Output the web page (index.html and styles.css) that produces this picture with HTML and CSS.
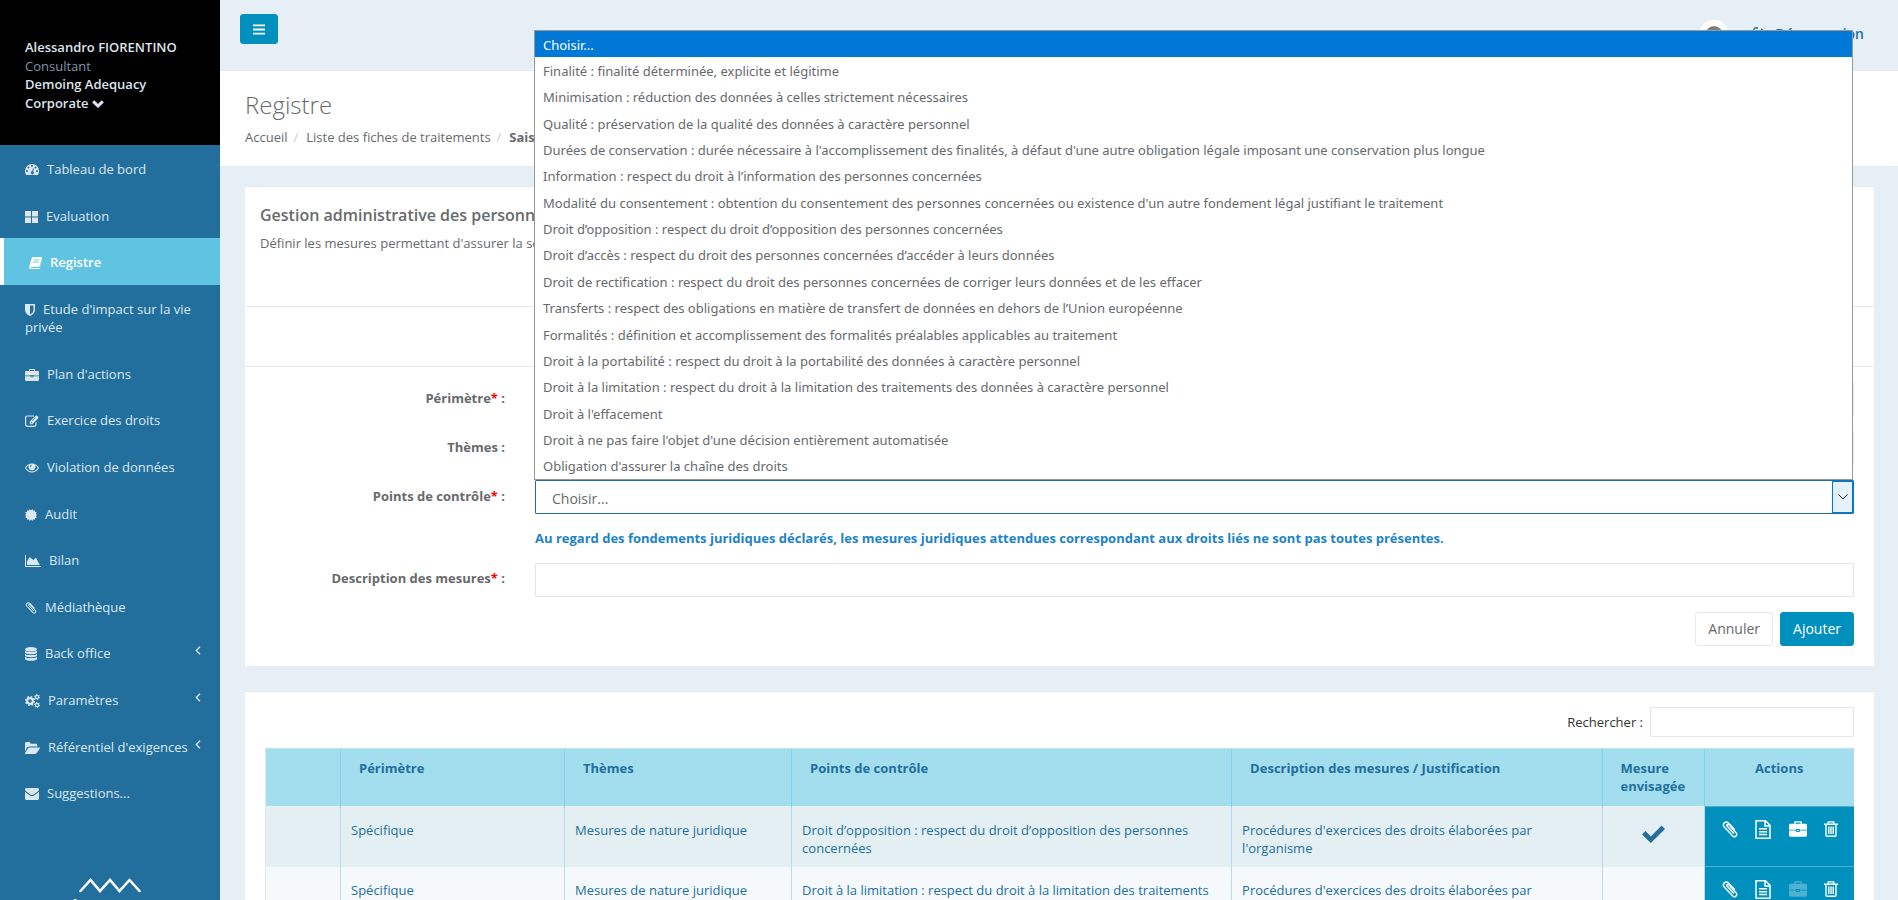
FILE: index.html
```html
<!DOCTYPE html>
<html lang="fr">
<head>
<meta charset="utf-8">
<title>Registre</title>
<link rel="stylesheet" href="styles.css">
</head>
<body>
<svg class="sprite" aria-hidden="true">
  <symbol id="i-dashboard" viewBox="0 0 14 12"><path fill-rule="evenodd" d="M7 0a7 7 0 0 0-7 7c0 1.600.5 3 1.300 4h11.400c.8-1 1.300-2.400 1.300-4a7 7 0 0 0-7-7zM2 6a1 1 0 1 0 0 2 1 1 0 0 0 0-2zm1.500-3.500a1 1 0 1 0 0 2 1 1 0 0 0 0-2zM7 1a1 1 0 1 0 0 2 1 1 0 0 0 0-2zm3.500 1.500a1 1 0 1 0 0 2 1 1 0 0 0 0-2zM12 6a1 1 0 1 0 0 2 1 1 0 0 0 0-2zM8 4.300l-.8 3a1.500 1.500 0 1 0 1 .3l.7-3z"/></symbol>
  <symbol id="i-grid" viewBox="0 0 13 12"><path d="M0 0h6v5.500H0zM7 0h6v5.500H7zM0 6.500h6V12H0zM7 6.500h6V12H7z"/></symbol>
  <symbol id="i-book" viewBox="0 0 13 12"><path fill-rule="evenodd" d="M4.500 0H12c.8 0 1.100.5.900 1.200l-2.300 8c-.2.500-.6.800-1.200.8H2.200c-.6 0-.8.300-.6.700.1.300.4.400.8.400H10c.5 0 .8-.2 1-.7L13 3.500c.1.300.1.600 0 .9l-2 6.600c-.2.600-.7 1-1.400 1H2.200C.8 12-.3 10.900.1 9.700L2.600 1.500C2.900.6 3.500 0 4.500 0zm.4 2.400-.3.900h5.600l.3-.9zm-.7 2.200-.3.900h5.600l.3-.9z"/></symbol>
  <symbol id="i-shield" viewBox="0 0 10 12"><path fill-rule="evenodd" d="M0 0h10v6c0 3-2.500 5-5 6-2.500-1-5-3-5-6zM5 1.500v8.800C7 9.300 8.500 8 8.500 6V1.500z"/></symbol>
  <symbol id="i-briefcase" viewBox="0 0 14 12"><path fill-rule="evenodd" d="M4 2V.9C4 .4 4.400 0 4.900 0h4.200c.5 0 .9.400.9.900V2h2.800c.7 0 1.200.5 1.200 1.200V6.500H8.500V6h-3v.5H0V3.200C0 2.500.5 2 1.200 2zm1-1v1h4V1zM0 7.200h5.500v.4c0 .5.200.7.700.7h1.600c.5 0 .7-.2.700-.7v-.4H14v3.600c0 .7-.5 1.200-1.200 1.200H1.200C.5 12 0 11.500 0 10.800zM6.300 6.800h1.400v.8H6.300z"/></symbol>
  <symbol id="i-edit" viewBox="0 0 14 12"><path fill="none" stroke="currentColor" stroke-width="1.200" d="M9 1H2.300C1.300 1 .6 1.700.6 2.600v7c0 1 .7 1.700 1.700 1.700h7c1 0 1.700-.7 1.700-1.700V7.500"/><path d="M4.800 9.200V6.600L10.700.8c.4-.4.900-.4 1.300 0l1.200 1.200c.4.400.4.900 0 1.300L7.400 9.200zm1-1.500.6.700 1-.3-1.100-1.100-.3.700zm1.300-2.200.4.400L10.800 2.600l-.4-.4z" fill-rule="evenodd"/></symbol>
  <symbol id="i-eye" viewBox="0 0 14 10"><path fill-rule="evenodd" d="M7 .5c3 0 5.500 1.700 7 4.500-1.500 2.800-4 4.500-7 4.500S1.500 7.800 0 5C1.500 2.200 4 .5 7 .5zM3.900 2.300C2.700 3 1.800 3.900 1.100 5c1.400 2.100 3.500 3.400 5.900 3.400S11.500 7.100 12.900 5c-.7-1.100-1.600-2-2.800-2.700a3.500 3.500 0 1 1-6.200 0zM7 1.700c-1.300 0-2.400 1-2.400 2.400h.8C5.400 3.200 6.100 2.500 7 2.500z"/></symbol>
  <symbol id="i-cert" viewBox="0 0 12 12"><path d="M6 1.400 7.400 0l.7 1.800L10 1.200l.1 1.800 1.700.3-.9 1.600L12 6l-1.100 1.100.9 1.600-1.700.3-.1 1.800-1.900-.6L7.400 12 6 10.600 4.600 12l-.7-1.800-1.900.6L1.900 9l-1.700-.3.900-1.600L0 6l1.100-1.100-.9-1.600L1.900 3 2 1.200l1.900.6L4.600 0z"/></symbol>
  <symbol id="i-chart" viewBox="0 0 16 12"><path d="M0 0h1v11h15v1H0zM2 10V6.500L4.800 2l3.400 3L11 2.800l3.800 7.200z"/></symbol>
  <symbol id="i-clip" viewBox="0 0 12 13"><path fill="none" stroke="currentColor" stroke-width="1.100" stroke-linecap="round" d="M8.600 9.200 3.900 4.100C3 3 4.300 2 5.200 2.900l5.500 6.200c1.400 1.800-1 4-2.600 2.400L1.600 4.600C-.3 2.300 2.600-.5 4.800 1.500l4.500 4.800"/></symbol>
  <symbol id="i-db" viewBox="0 0 12 14"><ellipse cx="6" cy="2.300" rx="6" ry="2.300"/><path d="M0 3.800c2 1.600 10 1.600 12 0v1.600c0 2.300-12 2.300-12 0zM0 7c2 1.600 10 1.600 12 0v1.600c0 2.300-12 2.300-12 0zM0 10.100c2 1.600 10 1.600 12 0v1.600c0 2.700-12 2.700-12 0z"/></symbol>
  <symbol id="i-cogs" viewBox="0 0 15 14"><circle cx="5" cy="7" r="2.900" fill="none" stroke="currentColor" stroke-width="2.200"/><circle cx="5" cy="7" r="4.400" fill="none" stroke="currentColor" stroke-width="1.400" stroke-dasharray="1.730 1.730"/><circle cx="12" cy="3" r="1.600" fill="none" stroke="currentColor" stroke-width="1.200"/><circle cx="12" cy="3" r="2.500" fill="none" stroke="currentColor" stroke-dasharray="1.310 1.310"/><circle cx="12" cy="11" r="1.600" fill="none" stroke="currentColor" stroke-width="1.200"/><circle cx="12" cy="11" r="2.500" fill="none" stroke="currentColor" stroke-dasharray="1.310 1.310"/></symbol>
  <symbol id="i-folder" viewBox="0 0 14 11"><path d="M0 9V1.500C0 .7.600 0 1.500 0h2.300c.8 0 1.400.6 1.400 1.500h4.900c.8 0 1.400.6 1.400 1.500v1H4.200c-1 0-2 .5-2.700 1.300zM4.300 5h9.200c.5 0 .6.400.4.800l-3 4.300c-.4.500-1 .9-1.800.9H.5c-.5 0-.6-.4-.4-.8l2.500-4.300c.4-.5 1-.9 1.700-.9z"/></symbol>
  <symbol id="i-mail" viewBox="0 0 14 12"><path d="M0 1.500C0 .6.600 0 1.400 0h11.200c.8 0 1.400.6 1.400 1.500 0 .8-.5 1.400-1.200 1.900L8.500 6.500c-.9.700-2.100.7-3 0L1.200 3.400C.5 2.900 0 2.300 0 1.500zM0 3.800l5 3.700c1.200.9 2.800.9 4 0l5-3.700v6.700c0 .9-.6 1.500-1.400 1.500H1.400C.6 12 0 11.400 0 10.500z"/></symbol>
  <symbol id="i-left" viewBox="0 0 5 8"><path fill="none" stroke="currentColor" stroke-width="1.200" d="M4.300.6 1 4l3.300 3.400"/></symbol>
  <symbol id="i-down" viewBox="0 0 12 8"><path fill="none" stroke="currentColor" stroke-width="3" d="m1.200 1.400 4.800 4.600 4.800-4.600"/></symbol>
  <symbol id="i-bars" viewBox="0 0 13 11"><path d="M0 0h13v2H0zM0 4.500h13v2H0zM0 9h13v2H0z"/></symbol>
  <symbol id="i-out" viewBox="0 0 14 12"><path fill="none" stroke="currentColor" stroke-width="1.300" d="M5 1H2.500C1.500 1 1 1.500 1 2.500v7c0 1 .5 1.500 1.500 1.500H5"/><path d="m8 1 5.500 5L8 11V8H4V4h4z"/></symbol>
  <symbol id="i-check" viewBox="0 0 23 18"><path d="m0 9.500 3.400-3.400 5.400 5.300L19.600.6 23 4 8.800 18z"/></symbol>
  <symbol id="i-file" viewBox="0 0 16 19"><path fill="none" stroke="currentColor" stroke-width="1.500" d="M1 .8h9.500L15 5.300v12.900H1zM10 1v5h5"/><path fill="none" stroke="currentColor" stroke-width="1.500" d="M4 8.800h8M4 11.700h8M4 14.600h8"/></symbol>
  <symbol id="i-trash" viewBox="0 0 14 16"><path fill="none" stroke="currentColor" stroke-width="1.400" d="M0 3.200h14M4.300 3V.9h5.400V3M2 3.500v10.800c0 .6.400 1 .9 1h8.200c.5 0 .9-.4.900-1V3.500M4.800 5.500v7.500M7 5.500v7.500M9.200 5.500v7.500"/></symbol>
</svg>

<div class="app">
  <aside class="sidebar">
    <div class="profile">
      <strong>Alessandro FIORENTINO</strong>
      <span class="role">Consultant</span>
      <button class="org" type="button">Demoing Adequacy Corporate <svg class="chev"><use href="#i-down"/></svg></button>
    </div>
    <nav class="nav">
      <a href="#"><svg class="w14"><use href="#i-dashboard"/></svg>Tableau de bord</a>
      <a href="#"><svg class="w13"><use href="#i-grid"/></svg>Evaluation</a>
      <a href="#" class="active"><svg class="w13"><use href="#i-book"/></svg>Registre</a>
      <a href="#"><svg class="w10"><use href="#i-shield"/></svg>Etude d'impact sur la vie privée</a>
      <a href="#"><svg class="w14"><use href="#i-briefcase"/></svg>Plan d'actions</a>
      <a href="#"><svg class="w14"><use href="#i-edit"/></svg>Exercice des droits</a>
      <a href="#"><svg class="w14"><use href="#i-eye"/></svg>Violation de données</a>
      <a href="#"><svg class="w12"><use href="#i-cert"/></svg>Audit</a>
      <a href="#"><svg class="w16"><use href="#i-chart"/></svg>Bilan</a>
      <a href="#"><svg class="w12"><use href="#i-clip"/></svg>Médiathèque</a>
      <a href="#"><svg class="w12 tall"><use href="#i-db"/></svg>Back office<svg class="arrow"><use href="#i-left"/></svg></a>
      <a href="#"><svg class="w15 tall"><use href="#i-cogs"/></svg>Paramètres<svg class="arrow"><use href="#i-left"/></svg></a>
      <a href="#"><svg class="w15"><use href="#i-folder"/></svg>Référentiel d'exigences<svg class="arrow"><use href="#i-left"/></svg></a>
      <a href="#"><svg class="w14"><use href="#i-mail"/></svg>Suggestions...</a>
    </nav>
    <div class="brand">
      <svg viewBox="0 0 62 16"><path d="M1.500 14 11.500 3l9.500 11L31 3l9.500 11L50.500 3l10 11"/></svg>
      <span>AdeQuacy</span>
    </div>
  </aside>

  <div class="page">
    <header class="topbar">
      <button class="btn primary menu" type="button" aria-label="Menu"><svg><use href="#i-bars"/></svg></button>
      <span class="avatar"></span>
      <a class="logout" href="#"><svg><use href="#i-out"/></svg>Déconnexion</a>
    </header>

    <section class="heading">
      <h1>Registre</h1>
      <ol class="crumbs">
        <li><a href="#">Accueil</a></li>
        <li><a href="#">Liste des fiches de traitements</a></li>
        <li><strong>Saisie</strong></li>
      </ol>
    </section>

    <main class="content">
      <section class="panel">
        <div class="intro">
          <h2>Gestion administrative des personnels</h2>
          <p>Définir les mesures permettant d'assurer la sécurité</p>
        </div>
        <div class="strip"></div>
        <form class="form">
          <label for="perimetre">Périmètre<i>*</i> :</label>
          <input id="perimetre" type="text">
          <label for="themes">Thèmes :</label>
          <input id="themes" type="text">
          <label for="points">Points de contrôle<i>*</i> :</label>
          <div class="picker">
            <select id="points" class="focused"><option>Choisir...</option></select>
            <span class="opener"><svg viewBox="0 0 10 6"><path d="m.5.5 4.500 4.500L9.500.5"/></svg></span>
            <ul class="options">
              <li class="on">Choisir...</li>
              <li>Finalité : finalité déterminée, explicite et légitime</li>
              <li>Minimisation : réduction des données à celles strictement nécessaires</li>
              <li>Qualité : préservation de la qualité des données à caractère personnel</li>
              <li>Durées de conservation : durée nécessaire à l'accomplissement des finalités, à défaut d'une autre obligation légale imposant une conservation plus longue</li>
              <li>Information : respect du droit à l’information des personnes concernées</li>
              <li>Modalité du consentement : obtention du consentement des personnes concernées ou existence d'un autre fondement légal justifiant le traitement</li>
              <li>Droit d’opposition : respect du droit d’opposition des personnes concernées</li>
              <li>Droit d’accès : respect du droit des personnes concernées d’accéder à leurs données</li>
              <li>Droit de rectification : respect du droit des personnes concernées de corriger leurs données et de les effacer</li>
              <li>Transferts : respect des obligations en matière de transfert de données en dehors de l’Union européenne</li>
              <li>Formalités : définition et accomplissement des formalités préalables applicables au traitement</li>
              <li>Droit à la portabilité : respect du droit à la portabilité des données à caractère personnel</li>
              <li>Droit à la limitation : respect du droit à la limitation des traitements des données à caractère personnel</li>
              <li>Droit à l'effacement</li>
              <li>Droit à ne pas faire l'objet d'une décision entièrement automatisée</li>
              <li>Obligation d'assurer la chaîne des droits</li>
            </ul>
          </div>
          <p class="notice">Au regard des fondements juridiques déclarés, les mesures juridiques attendues correspondant aux droits liés ne sont pas toutes présentes.</p>
          <label for="description">Description des mesures<i>*</i> :</label>
          <input id="description" type="text">
          <div class="actions">
            <button class="btn" type="button">Annuler</button>
            <button class="btn primary" type="button">Ajouter</button>
          </div>
        </form>
      </section>

      <section class="panel list">
        <div class="search">
          <label for="search">Rechercher :</label>
          <input id="search" type="search">
        </div>
        <table>
          <colgroup><col class="c1"><col class="c2"><col class="c3"><col class="c4"><col class="c5"><col class="c6"><col class="c7"></colgroup>
          <thead>
            <tr><th></th><th>Périmètre</th><th>Thèmes</th><th>Points de contrôle</th><th>Description des mesures / Justification</th><th>Mesure envisagée</th><th class="mid">Actions</th></tr>
          </thead>
          <tbody>
            <tr>
              <td></td><td>Spécifique</td><td>Mesures de nature juridique</td>
              <td>Droit d’opposition : respect du droit d’opposition des personnes concernées</td>
              <td>Procédures d'exercices des droits élaborées par l'organisme</td>
              <td class="mid"><svg class="check"><use href="#i-check"/></svg></td>
              <td class="tools"><div>
                <button type="button" aria-label="Joindre"><svg class="t-clip"><use href="#i-clip"/></svg></button>
                <button type="button" aria-label="Document"><svg class="t-file"><use href="#i-file"/></svg></button>
                <button type="button" aria-label="Plan d'actions"><svg class="t-case"><use href="#i-briefcase"/></svg></button>
                <button type="button" aria-label="Supprimer"><svg class="t-trash"><use href="#i-trash"/></svg></button>
              </div></td>
            </tr>
            <tr>
              <td></td><td>Spécifique</td><td>Mesures de nature juridique</td>
              <td>Droit à la limitation : respect du droit à la limitation des traitements des données à caractère personnel</td>
              <td>Procédures d'exercices des droits élaborées par l'organisme</td>
              <td></td>
              <td class="tools"><div>
                <button type="button" aria-label="Joindre"><svg class="t-clip"><use href="#i-clip"/></svg></button>
                <button type="button" aria-label="Document"><svg class="t-file"><use href="#i-file"/></svg></button>
                <button type="button" aria-label="Plan d'actions" disabled><svg class="t-case"><use href="#i-briefcase"/></svg></button>
                <button type="button" aria-label="Supprimer"><svg class="t-trash"><use href="#i-trash"/></svg></button>
              </div></td>
            </tr>
          </tbody>
        </table>
      </section>
    </main>
  </div>
</div>
</body>
</html>
```

FILE: styles.css
```css
* { box-sizing: border-box; }

body {
  margin: 0;
  height: 100vh;
  overflow: hidden;
  background: #e7eff6;
  color: #676a6c;
  font: 13px/1.43 "Open Sans", "Liberation Sans", sans-serif;
}

a { color: inherit; text-decoration: none; }
button, input, select { font: inherit; color: inherit; }
h1, h2, p, ol, ul { margin: 0; padding: 0; }
svg { fill: currentColor; }
.sprite { position: absolute; width: 0; height: 0; }

.app { display: flex; align-items: flex-start; }

/* Sidebar */
.sidebar {
  flex: 0 0 220px;
  min-height: 100vh;
  background: #226f9e;
  color: #dbe8f1;
}
.profile {
  display: flex;
  flex-direction: column;
  align-items: flex-start;
  height: 145px;
  padding: 38px 25px 0;
  background: #000;
  color: #dfe4ed;
}
.profile strong { font-weight: 600; white-space: nowrap; }
.role { color: #8095a8; }
.org {
  padding: 0;
  border: 0;
  background: none;
  font-weight: 600;
  text-align: left;
}
.chev { width: 12px; height: 8px; }

.nav { display: flex; flex-direction: column; }
.nav a { position: relative; padding: 15px 20px 13px 25px; }
.nav a > svg:first-child { margin-right: 8px; height: 12px; vertical-align: -2px; }
.nav a > .tall:first-child { height: 14px; vertical-align: -3px; }
.nav .active {
  border-left: 4px solid #fff;
  background: #61c3e2;
  color: #fff;
  font-weight: 600;
}
.w10 { width: 10px; }
.w12 { width: 12px; }
.w13 { width: 13px; }
.w14 { width: 14px; }
.w15 { width: 15px; }
.w16 { width: 16px; }
.arrow { position: absolute; right: 19px; top: 17px; width: 6px; height: 9px; }

.brand {
  display: flex;
  flex-direction: column;
  align-items: center;
  padding-top: 61px;
  color: #fff;
  font-size: 28px;
  line-height: 32px;
}
.brand svg { width: 62px; height: 16px; fill: none; stroke: #fff; stroke-width: 2.500; stroke-linecap: round; }

/* Page frame */
.page { flex: 1; min-width: 0; }
.topbar {
  display: flex;
  align-items: flex-start;
  height: 71px;
  padding: 14px 34px 0 20px;
  border-bottom: 1px solid #e7eaec;
}
.btn {
  padding: 6px 12px;
  border: 1px solid #e7eaec;
  border-radius: 3px;
  background: #fff;
  font-size: 14px;
  line-height: 20px;
}
.primary { border-color: #0090bd; background: #0090bd; color: #fff; }
.menu { display: flex; width: 38px; height: 30px; align-items: center; justify-content: center; }
.menu svg { width: 13px; height: 11px; }
.avatar {
  width: 30px;
  height: 30px;
  margin: 6px 24px 0 auto;
  border: 6px solid #fff;
  border-radius: 50%;
  background: #7d7f81;
}
.logout { margin-top: 10px; color: #226f9e; font-size: 14px; font-weight: 600; }
.logout svg { width: 14px; height: 12px; margin-right: 8px; }

.heading {
  height: 96px;
  padding: 17px 25px;
  border-bottom: 1px solid #e7eaec;
  background: #fff;
}
h1 { font-size: 24px; font-weight: 300; line-height: 33px; }
.crumbs { display: flex; padding-top: 7px; list-style: none; }
.crumbs li + li::before { content: "/"; padding: 0 8px 0 6px; color: #ccc; }

.content { display: grid; gap: 25px; padding: 19px 24px 0 25px; }
.panel { background: #fff; border-top: 1px solid #e7eaec; }

/* Form */
.intro { height: 120px; padding: 16px 15px; border-bottom: 1px solid #e7eaec; }
h2 { font-size: 16px; font-weight: 600; line-height: 24px; }
.intro p { padding-top: 7px; }
.strip { height: 60px; border-bottom: 1px solid #e7eaec; }
.form {
  display: grid;
  grid-template-columns: 240px 1fr;
  gap: 15px 30px;
  align-items: center;
  padding: 15px 20px 20px;
}
.form label { padding-bottom: 2px; text-align: right; font-weight: 700; }
.form i { color: #f00; font-style: normal; }
input, select {
  width: 100%;
  height: 34px;
  padding: 6px 12px;
  border: 1px solid #e5e6e7;
  border-radius: 1px;
  background: #fff;
  outline: 0;
}
.picker { position: relative; }
select { display: block; padding: 8px 16px 5px; appearance: none; font-size: 14px; }
.focused { border-color: #226f9e; }
.opener {
  position: absolute;
  top: 1px;
  right: 0;
  display: grid;
  place-items: center;
  width: 22px;
  height: 32px;
  border: 1px solid #0078d7;
  border-right-width: 2px;
  background: #e5f1fb;
  pointer-events: none;
}
.opener svg { width: 10px; height: 6px; fill: none; stroke: #222; }
.options {
  position: absolute;
  bottom: 100%;
  left: -1px;
  right: 1px;
  display: grid;
  grid-auto-rows: 1fr;
  min-height: 450px;
  border: 1px solid #999;
  background: #fff;
  color: #676a6c;
  font: 13px/20px "Noto Sans", "Open Sans", sans-serif;
  list-style: none;
}
.options li { display: flex; align-items: center; padding: 1px 8px 0; white-space: nowrap; }
.options .on { background: #0078d7; color: #fff; }
.notice { grid-column: 2; color: #1c84c6; font-weight: 700; }
.actions { grid-column: 2; display: flex; justify-content: flex-end; gap: 7px; }

/* Table */
.list { padding: 15px 20px; }
.search {
  display: flex;
  justify-content: flex-end;
  align-items: center;
  gap: 7px;
  margin-bottom: 11px;
  color: #333;
}
.search label { padding-top: 1px; }
.search input { width: 204px; height: 30px; }
table {
  width: 100%;
  table-layout: fixed;
  border-collapse: collapse;
  color: #226f9e;
}
.c1 { width: 75px; }
.c2 { width: 14.1%; }
.c3 { width: 14.3%; }
.c4 { width: 27.7%; }
.c6 { width: 102px; }
.c7 { width: 150px; }
th, td { vertical-align: top; border-left: 1px solid #b5dcea; }
th {
  padding: 10px 18px;
  border-top: 1px solid #b9e5f0;
  border-left-color: #85cfe8;
  background: #a2deee;
  text-align: left;
}
td { padding: 14px 10px 8px; border-top: 1px solid #e7f0f4; background: #f5f9fc; }
tr > :first-child { border-left-color: #e0e6ea; }
tbody tr:nth-child(odd) td { background: #e4eff3; }
.mid { text-align: center; }
.check { width: 23px; height: 18px; margin-top: 4px; }
tbody tr .tools, tbody tr:nth-child(odd) .tools {
  padding: 13px 16px 13px 17px;
  border-top-color: #4db1d0;
  background: #0090bd;
  color: #fff;
}
.tools div { display: flex; justify-content: space-between; align-items: center; }
.tools button { display: flex; padding: 0; border: 0; background: none; }
.tools button:disabled { color: #fff; opacity: 0.3; }
.t-clip { width: 16px; height: 17px; }
.t-file { width: 16px; height: 19px; }
.t-case { width: 18px; height: 16px; }
.t-trash { width: 14px; height: 16px; }
```
